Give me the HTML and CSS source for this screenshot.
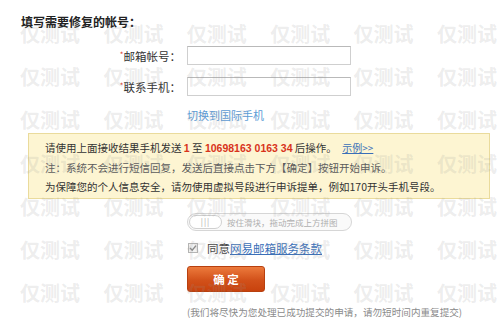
FILE: index.html
```html
<!DOCTYPE html>
<html lang="zh-CN">
  <head>
    <meta charset="UTF-8" />
    <title>帐号修复</title>
    <link rel="stylesheet" href="styles.css">
  </head>
  <body>
    <div class="page">
      <h3 class="title">填写需要修复的帐号：</h3>

      <div class="row">
        <label class="label"><i>*</i>邮箱帐号：</label>
        <input class="field" type="text" />
      </div>
      <div class="row row-second">
        <label class="label"><i>*</i>联系手机：</label>
        <input class="field" type="text" />
      </div>
      <div class="row row-link">
        <span class="label"></span>
        <a class="switch" href="#">切换到国际手机</a>
      </div>

      <div class="notice">
        <p>请使用上面接收结果手机发送 <b>1</b> 至 <b>10698163 0163 34</b> 后操作。 <a href="#">示例&gt;&gt;</a></p>
        <p class="muted">注：系统不会进行短信回复，发送后直接点击下方【确定】按钮开始申诉。</p>
        <p>为保障您的个人信息安全，请勿使用虚拟号段进行申诉提单，例如170开头手机号段。</p>
      </div>

      <div class="row row-slider">
        <span class="label"></span>
        <div class="slider">
          <span class="handle">|||</span>
          <span class="hint">按住滑块，拖动完成上方拼图</span>
        </div>
      </div>

      <div class="row row-agree">
        <span class="label"></span>
        <svg class="check" width="10" height="10" viewBox="0 0 10 10">
          <rect x="0.5" y="0.5" width="9" height="9" fill="#f2f2f2" stroke="#b5b5b5" />
          <path d="M2 5 L4.2 7.2 L8 2.6" fill="none" stroke="#8a8a8a" stroke-width="1.4" />
        </svg>
        <span class="agree">同意<a href="#">网易邮箱服务条款</a></span>
      </div>

      <div class="row row-submit">
        <span class="label"></span>
        <button class="submit">确 定</button>
      </div>

      <div class="row row-tip">
        <span class="label"></span>
        <span class="tip">(我们将尽快为您处理已成功提交的申请，请勿短时间内重复提交)</span>
      </div>

      <!-- watermark layer -->
      <div class="watermark">
        <span>仅测试</span><span>仅测试</span><span>仅测试</span><span>仅测试</span><span>仅测试</span><span>仅测试</span>
        <span>仅测试</span><span>仅测试</span><span>仅测试</span><span>仅测试</span><span>仅测试</span><span>仅测试</span>
        <span>仅测试</span><span>仅测试</span><span>仅测试</span><span>仅测试</span><span>仅测试</span><span>仅测试</span>
        <span>仅测试</span><span>仅测试</span><span>仅测试</span><span>仅测试</span><span>仅测试</span><span>仅测试</span>
        <span>仅测试</span><span>仅测试</span><span>仅测试</span><span>仅测试</span><span>仅测试</span><span>仅测试</span>
        <span>仅测试</span><span>仅测试</span><span>仅测试</span><span>仅测试</span><span>仅测试</span><span>仅测试</span>
        <span>仅测试</span><span>仅测试</span><span>仅测试</span><span>仅测试</span><span>仅测试</span><span>仅测试</span>
      </div>
    </div>
  </body>
</html>
```

FILE: styles.css
```css
body {
  margin: 0;
  padding: 0;
  background-color: #fff;
  font-family: "Noto Sans CJK SC", "Liberation Sans", sans-serif;
  color: #333;
}

.page {
  position: relative;
  width: 500px;
  height: 324px;
  overflow: hidden;
  padding-top: 15px;
  box-sizing: border-box;
}

.title {
  margin: 0 0 0 21px;
  font-size: 12px;
  line-height: 14px;
  font-weight: bold;
  color: #222;
}

/* Form rows */
.row {
  display: flex;
  align-items: center;
}

.label {
  flex: 0 0 181px;
  text-align: right;
  font-size: 11.5px;
  line-height: 19px;
  margin-right: 6px;
  color: #333;
}

.label i {
  font-style: normal;
  color: #e03a2a;
  font-size: 8px;
  vertical-align: 3px;
}

.row:nth-of-type(1) {
  margin-top: 16px;
}

.row-second {
  margin-top: 10px;
}

.field {
  width: 164px;
  height: 19px;
  box-sizing: border-box;
  border: 1px solid #cfcfcf;
  border-top-color: #b9b9b9;
  margin: 0;
  padding: 0 4px;
}

.row-link {
  margin-top: 11px;
}

.switch {
  font-size: 11px;
  line-height: 14px;
  color: #5b9bd5;
  text-decoration: none;
}

/* Notice box */
.notice {
  margin: 11px 0 0 28px;
  width: 462px;
  box-sizing: border-box;
  padding: 4px 0 2px 16px;
  background-color: #fdf5d2;
  border: 1px solid #eadb9c;
  font-size: 10.5px;
}

.notice p {
  margin: 0;
  line-height: 19px;
  white-space: nowrap;
}

.notice .muted {
  color: #5a5a5a;
}

.notice b {
  color: #d8331b;
  font-family: "Liberation Sans", sans-serif;
  font-size: 10.5px;
}

.notice a {
  color: #3a6fb8;
  margin-left: 3px;
  font-size: 10px;
}

/* Slider */
.row-slider {
  margin-top: 14px;
}

.slider {
  display: flex;
  align-items: center;
  width: 165px;
  height: 18px;
  box-sizing: border-box;
  border: 1px solid #d6d6d6;
  border-radius: 9px;
  background-color: #fafafa;
}

.handle {
  width: 33px;
  height: 14px;
  margin-left: 1px;
  box-sizing: border-box;
  border: 1px solid #d0d0d0;
  border-radius: 8px;
  background-color: #fff;
  text-align: center;
  font-size: 8px;
  line-height: 12px;
  color: #aaa;
  letter-spacing: 1px;
}

.hint {
  margin-left: 5px;
  font-size: 8.5px;
  color: #b0b0b0;
  white-space: nowrap;
}

/* Agreement */
.row-agree {
  margin-top: 10px;
  height: 14px;
}

.check {
  margin: 0 9px 0 1px;
}

.agree {
  font-size: 11.5px;
  line-height: 14px;
  color: #444;
}

.agree a {
  color: #3a6fb8;
}

/* Submit */
.row-submit {
  margin-top: 11px;
}

.submit {
  width: 78px;
  height: 26px;
  padding: 0;
  border: 1px solid #b8400f;
  border-radius: 3px;
  background: linear-gradient(#ec7a3c, #d2511a 55%, #c8420d);
  color: #fff;
  font-family: "Noto Sans CJK SC", sans-serif;
  font-size: 11.5px;
  font-weight: bold;
  line-height: 24px;
  cursor: pointer;
}

.row-tip {
  margin-top: 14px;
}

.tip {
  font-size: 9.6px;
  line-height: 13px;
  color: #8a8a8a;
  white-space: nowrap;
}

/* Watermark overlay */
.watermark {
  position: absolute;
  top: 22px;
  left: 20px;
  display: grid;
  grid-template-columns: repeat(6, 83.4px);
  grid-auto-rows: 43.2px;
  pointer-events: none;
}

.watermark span {
  font-size: 20px;
  line-height: 24px;
  font-weight: bold;
  color: rgba(150, 150, 150, 0.18);
  white-space: nowrap;
}
```
